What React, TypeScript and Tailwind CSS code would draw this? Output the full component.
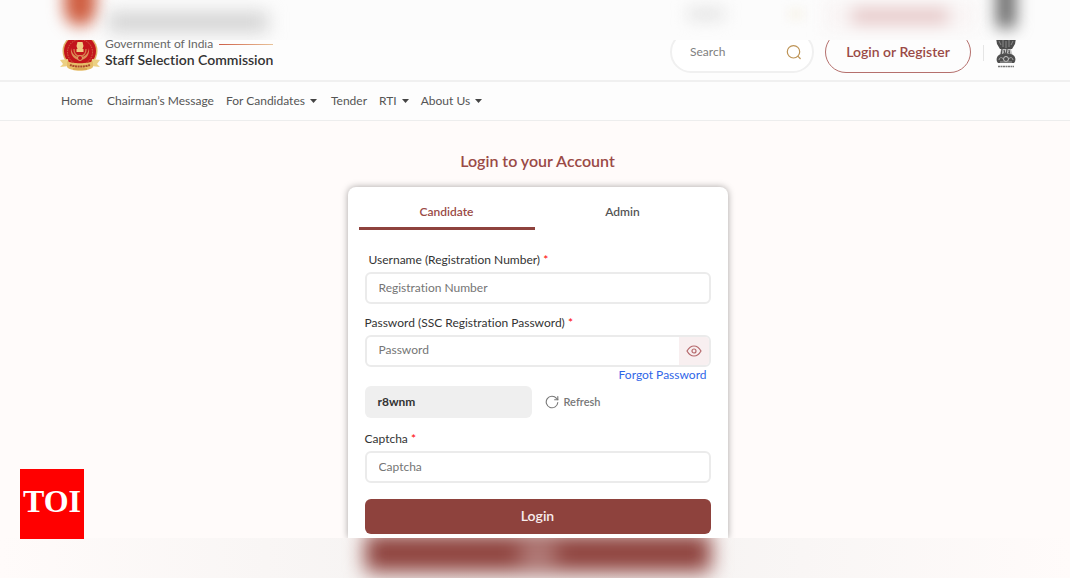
import { useState } from 'react';
import type { ReactNode } from 'react';

const NAV_ITEMS = [
  { label: 'Home', menu: false, gap: 'mr-[14px]' },
  { label: 'Chairman’s Message', menu: false, gap: 'mr-3' },
  { label: 'For Candidates', menu: true, gap: 'mr-[14px]' },
  { label: 'Tender', menu: false, gap: 'mr-3' },
  { label: 'RTI', menu: true, gap: 'mr-3' },
  { label: 'About Us', menu: true, gap: '' },
];

const inputCls =
  'h-8 w-full rounded-md border-2 border-[#ebebeb] bg-white px-3 pb-[2px] text-xs text-[#333] placeholder:text-[#757575] outline-none';

function SscEmblem() {
  return (
    <svg viewBox="0 0 40 40" className="h-10 w-10 shrink-0" aria-hidden="true">
      <circle cx="20" cy="20" r="17.500" fill="#e0b268" />
      <circle cx="20" cy="20" r="16" fill="#c3161c" />
      <circle cx="20" cy="21" r="12.500" fill="none" stroke="#cf6a48" strokeWidth="1" strokeDasharray="1.5 1" />
      <path d="M11 17c-1 8 4 12 9 12s10-4 9-12c-1 6-4 9-9 9s-8-3-9-9z" fill="#dc8f58" />
      <path d="M14 18c0 5 3 7 6 7s6-2 6-7" fill="none" stroke="#d77a4c" strokeWidth="1.3" />
      <path d="M17.500 11h5l1 4-1 3h1v3h-7v-3h1l-1-3z" fill="#f0cf86" />
      <circle cx="20" cy="27" r="2.500" fill="#c3161c" stroke="#e0a468" />
      <path d="M0 29l8-1 1 7-9 1 3-3z" fill="#ecd083" />
      <path d="M40 29l-8-1-1 7 9 1-3-3z" fill="#ecd083" />
      <path d="M7 30c4 3 22 3 26 0v6c-4 5-22 5-26 0z" fill="#e6bd68" />
      <path d="M10 34c5 2 15 2 20 0" fill="none" stroke="#ab4a2b" strokeWidth="2" strokeDasharray="2 .6" />
      <path d="M13 38h14" stroke="#d6a34e" strokeWidth="1.500" />
    </svg>
  );
}

function StateEmblem() {
  return (
    <svg viewBox="0 0 20 38" className="h-[38px] w-5 shrink-0" aria-hidden="true">
      <path d="M4 2c3-3 9-3 12 0l4 6-1 6-3 5H4l-3-5-1-6z" fill="#4d4d4d" />
      <path d="M3 11l2 4M7 9v8M10 11v7M13 9v8M17 11l-2 4" stroke="#8a8a8a" strokeWidth="1" />
      <path d="M5 19h10l2 8H3z" fill="#c4c4c4" />
      <path d="M6 19l-1 7M8 20l1 4M11 19l-1 6M13 20l1 6" stroke="#555" strokeWidth="1.200" />
      <path d="M7 23l2 1M12 22l2 2" stroke="#777" strokeWidth="1" />
      <path d="M3 25c3-2 11-2 14 0 3 2 3 6 1 8H2c-2-2-2-6 1-8z" fill="#4f4f4f" />
      <circle cx="10" cy="29" r="2.500" fill="none" stroke="#c9c9c9" />
      <path d="M3 30c0-3 4-3 4-1M13 29c0-2 4-2 4 1M4 32h12" fill="none" stroke="#a5a5a5" strokeWidth="1" />
      <path d="M2 36.500h16" stroke="#777" strokeWidth="1.500" strokeDasharray="2 .5" />
    </svg>
  );
}

function SearchIcon() {
  return (
    <svg viewBox="0 0 16 16" className="h-4 w-4" fill="none" stroke="#bd9355" strokeWidth="1.200" strokeLinecap="round">
      <circle cx="7.500" cy="7.800" r="6.200" />
      <path d="M12 12.300l2.200 2.200" />
    </svg>
  );
}

function EyeIcon() {
  return (
    <svg viewBox="0 0 16 14" className="h-[14px] w-4" fill="none" stroke="#b5686b" strokeWidth="1.200">
      <path d="M1 7c2-3.500 4.500-5 7-5s5 1.500 7 5c-2 3.500-4.500 5-7 5S3 10.500 1 7z" />
      <circle cx="8" cy="7" r="2" />
    </svg>
  );
}

function RefreshIcon() {
  return (
    <svg viewBox="0 0 14 14" className="h-[14px] w-[14px]" fill="none" stroke="#777" strokeWidth="1.100" strokeLinecap="round">
      <path d="M12.800 7.500A5.800 5.800 0 1 1 11.500 3.300L12.800 4.600" />
      <path d="M12.800 1.500v3.200H9.600" />
    </svg>
  );
}

function FieldLabel({ htmlFor, children }: { htmlFor: string; children: ReactNode }) {
  return (
    <label htmlFor={htmlFor} className="block text-xs leading-5 text-[#333]">
      {children} <span className="text-[#f00]">*</span>
    </label>
  );
}

function TopHaze() {
  return (
    <div aria-hidden="true" className="relative z-10 flex h-10 items-start overflow-hidden bg-[#fcfcfc] pl-16 pr-[54px]">
      <div className="-mt-8 h-[58px] w-8 rounded-b-2xl bg-[#cf5f42] blur-[8px]" />
      <div className="ml-3 mt-3 h-5 w-40 bg-[#d2d2d2] blur-[9px]" />
      <div className="ml-auto mt-2 h-3 w-9 bg-[#e2e2e2] blur-[8px]" />
      <div className="ml-16 mt-2 h-3 w-4 bg-[#f8f5ee] blur-[5px]" />
      <div className="ml-5 flex h-8 w-[152px] items-start justify-center bg-[#f9f5f5] blur-[8px]">
        <div className="mt-2 h-4 w-24 bg-[#e6c8c8]" />
      </div>
      <div className="-mt-8 ml-5 h-[60px] w-5 bg-[#6c6c6c] blur-[8px]" />
    </div>
  );
}

export default function App() {
  const [tab, setTab] = useState<'candidate' | 'admin'>('candidate');
  const [showPassword, setShowPassword] = useState(false);

  const tabCls = (active: boolean) =>
    active
      ? 'h-[35px] rounded-t-[3px] border-b-[3px] border-[#8e423d] pt-[2px] text-xs font-semibold text-[#9a4a46]'
      : 'h-[35px] border-b-[3px] border-transparent pt-[2px] text-xs font-semibold text-[#555]';

  return (
    <div className="relative bg-[#fffbfa] font-['Lato','Noto_Sans',sans-serif] [font-variant-ligatures:none]">
      <TopHaze />

      <header className="flex h-[42px] items-end justify-between border-b-2 border-[#f0f0f0] bg-[#fdfdfd] pl-[60px] pr-[54px]">
        <div className="flex items-end gap-[5px] pb-[9px]">
          <SscEmblem />
          <div className="pb-[5px]">
            <div className="flex items-center gap-[6px] text-[12px] leading-3 text-[#666]">
              Government of India
              <span className="h-px flex-1 bg-linear-to-r from-[#cc5f48] to-[#e8c39a]" />
            </div>
            <div className="mt-1 text-[14px] font-semibold leading-3 text-[#333]">Staff Selection Commission</div>
          </div>
        </div>

        <div className="flex items-end pb-[7px]">
          <div className="flex h-[42px] w-36 items-center rounded-full border-2 border-[#f0f0f0] bg-white pl-[18px] pr-[10px]">
            <input aria-label="Search" placeholder="Search" className="w-full min-w-0 flex-1 text-xs outline-none placeholder:text-[#808080]" />
            <button type="button" aria-label="Submit search">
              <SearchIcon />
            </button>
          </div>
          <button type="button" className="ml-[11px] h-[42px] w-[146px] rounded-full border border-[#b5706d] pb-[2px] text-[14px] font-semibold text-[#9a4a46]">
            Login or Register
          </button>
          <div className="mb-3 ml-3 mr-3 h-4 w-px bg-[#e5e5e5]" />
          <div className="mb-[5px]">
            <StateEmblem />
          </div>
        </div>
      </header>

      <nav className="flex h-[39px] items-center border-b border-[#ededed] bg-[#fdfdfd] pl-[61px] text-xs text-[#555]">
        {NAV_ITEMS.map((item) => (
          <a key={item.label} href="#" className={`flex items-center gap-[5px] ${item.gap}`}>
            {item.label}
            {item.menu && (
              <svg viewBox="0 0 7 4" className="h-1 w-[7px]" aria-hidden="true">
                <path d="M0 0h7L3.500 4z" fill="#444" />
              </svg>
            )}
          </a>
        ))}
      </nav>

      <main className="flex flex-col items-center overflow-hidden pl-[5px] pt-[30px]">
        <h1 className="mb-4 text-[16px] font-semibold leading-5 text-[#9a4a46]">Login to your Account</h1>

        <div className="w-[380px] rounded-t-lg bg-white px-[17px] pb-1 pt-2 shadow-[0_0_7px_rgba(0,0,0,0.35)]">
          <div role="tablist" className="-ml-[6px] grid grid-cols-2">
            <button type="button" role="tab" aria-selected={tab === 'candidate'} onClick={() => setTab('candidate')} className={tabCls(tab === 'candidate')}>
              Candidate
            </button>
            <button type="button" role="tab" aria-selected={tab === 'admin'} onClick={() => setTab('admin')} className={tabCls(tab === 'admin')}>
              Admin
            </button>
          </div>

          <form onSubmit={(e) => e.preventDefault()}>
            <div className="mb-[2px] ml-1 mt-5">
              <FieldLabel htmlFor="username">Username (Registration Number)</FieldLabel>
            </div>
            <input id="username" placeholder="Registration Number" className={inputCls} />

            <div className="mb-[2px] mt-[9px]">
              <FieldLabel htmlFor="password">Password (SSC Registration Password)</FieldLabel>
            </div>
            <div className="flex h-8 overflow-hidden rounded-md border-2 border-[#ebebeb]">
              <input
                id="password"
                type={showPassword ? 'text' : 'password'}
                placeholder="Password"
                className="min-w-0 flex-1 px-3 pb-[2px] text-xs text-[#333] outline-none placeholder:text-[#757575]"
              />
              <button
                type="button"
                aria-label="Show password"
                onClick={() => setShowPassword(!showPassword)}
                className="flex w-[30px] items-center justify-center bg-[#f8eff0]"
              >
                <EyeIcon />
              </button>
            </div>
            <div className="flex justify-end pr-1">
              <a href="#" className="text-xs leading-4 text-[#2f66e8]">Forgot Password</a>
            </div>

            <div className="mt-[3px] flex items-center">
              <output className="flex h-8 w-[167px] items-center rounded-md bg-[#efefef] px-[13px] text-xs font-bold text-[#333]">r8wnm</output>
              <button type="button" className="ml-[13px] flex items-center gap-[5px] text-[11px] font-semibold text-[#777]">
                <RefreshIcon />
                Refresh
              </button>
            </div>

            <div className="mb-[2px] mt-[11px]">
              <FieldLabel htmlFor="captcha">Captcha</FieldLabel>
            </div>
            <input id="captcha" placeholder="Captcha" className={inputCls} />

            <button type="submit" className="mt-4 block h-[35px] w-full rounded-md bg-[#8e423d] pb-[2px] text-[14px] font-semibold text-[#f8eded]">
              Login
            </button>
          </form>
        </div>
      </main>

      <div aria-hidden="true" className="flex h-10 justify-center overflow-hidden bg-linear-to-r from-[#fffbfa] via-[#f3f1f0] to-[#fffbfa] pl-[5px]">
        <div className="-mt-1 flex h-[38px] w-[346px] shrink-0 justify-center bg-[#8e423d] blur-[10px]">
          <div className="mt-3 h-4 w-9 bg-[#be908e]" />
        </div>
      </div>

      <div className="absolute bottom-[39px] left-5 flex h-[70px] w-16 items-center justify-center bg-[#f00] pb-[6px] font-['Liberation_Serif',serif] text-[32px] font-bold leading-none text-white">
        TOI
      </div>
    </div>
  );
}
